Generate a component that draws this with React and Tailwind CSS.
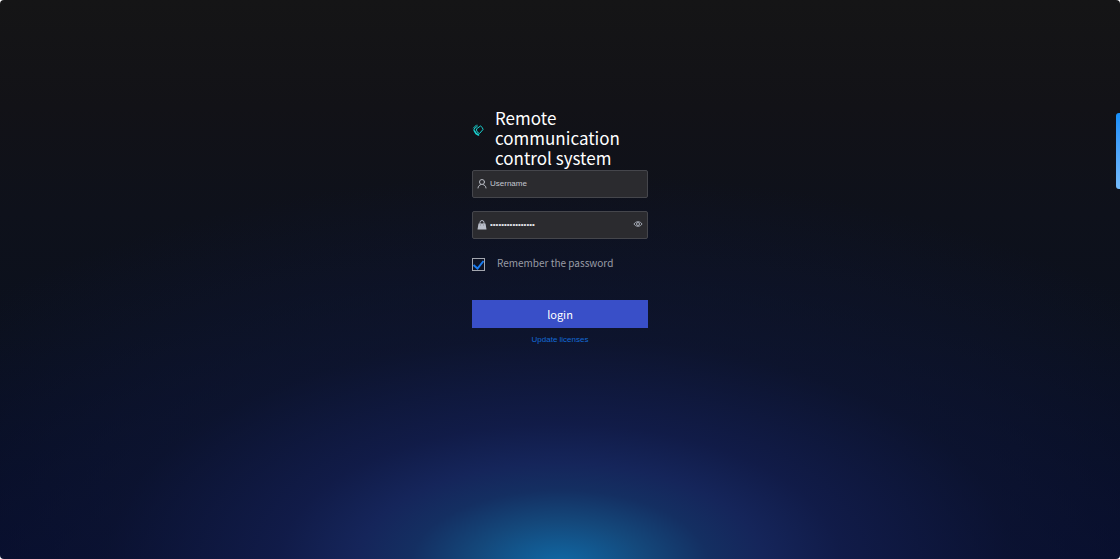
import { useState } from "react";

function LogoIcon() {
  return (
    <svg
      viewBox="0 0 24 24"
      className="h-3 w-3 shrink-0"
      fill="none"
      stroke="#19d3d1"
      strokeWidth="2"
      strokeLinejoin="round"
      strokeLinecap="round"
      aria-hidden="true"
    >
      <path d="M10 9 17 4Q22 7 22 11L15 19Q10 18 9 13Z" />
      <path d="M3 8 9 2" />
      <path d="M4 13V10L11 4" />
      <path d="M5 14 8 19 13 22" strokeWidth="3" />
    </svg>
  );
}

function UserIcon() {
  return (
    <svg
      viewBox="0 0 20 20"
      className="h-[10px] w-[10px] shrink-0"
      fill="none"
      stroke="#b4b7bf"
      strokeWidth="2"
      strokeLinecap="round"
      aria-hidden="true"
    >
      <circle cx="10" cy="6" r="5" />
      <path d="M2 18c0-4 3-6 6-7M18 18c0-4-3-6-6-7" />
    </svg>
  );
}

function LockIcon() {
  return (
    <svg viewBox="0 0 20 20" className="h-[10px] w-[10px] shrink-0" aria-hidden="true">
      <path d="M6 8V5a4 4 0 0 1 8 0v3" fill="none" stroke="#b9bdc8" strokeWidth="2" />
      <path d="M3 7h14l2 12H1Z" fill="#b9bdc8" />
      <path d="M7 9v2M13 9v2" stroke="#55565c" strokeWidth="1" />
    </svg>
  );
}

function EyeIcon() {
  return (
    <svg
      viewBox="0 0 20 20"
      className="h-[10px] w-[10px]"
      fill="none"
      stroke="#a3a8b3"
      strokeWidth="2"
      aria-hidden="true"
    >
      <path d="M2 8c3-6 13-6 16 0-3 6-13 6-16 0Z" />
      <circle cx="10" cy="8" r="3" />
    </svg>
  );
}

const fieldClass =
  "flex h-7 items-center gap-[3px] rounded-xs border border-[#45464c] bg-[#2b2b2f] px-1";
const inputClass =
  "min-w-0 flex-1 bg-transparent font-['Liberation_Sans',sans-serif] text-[8px] leading-3 text-[#e4e6ec] outline-none placeholder:text-[#c4c7cf]";

export default function App() {
  const [username, setUsername] = useState("");
  const [password, setPassword] = useState("remote-control-1");
  const [showPassword, setShowPassword] = useState(false);
  const [remember, setRemember] = useState(true);

  return (
    <div className="bg-white">
      <main className="relative min-h-screen overflow-hidden rounded-[4px] bg-[radial-gradient(ellipse_70%_70%_at_50%_101%,#1069a5_0%,#14487b_11%,#142f62_19%,#15255a_26%,#121d4ce6_36%,#0f173899_58%,#0d142e00_100%),linear-gradient(180deg,#151516_0%,#121217_19%,#0e111b_38%,#0b101d_60%,#070d22_80%,#040a28_100%)] px-4 pt-[108px] pb-8 font-['Noto_Sans_CJK_SC',sans-serif]">
        <form className="mx-auto flex w-44 flex-col" onSubmit={(e) => e.preventDefault()}>
          <div className="flex items-start gap-[11px]">
            <div className="flex h-11 items-center">
              <LogoIcon />
            </div>
            <h1 className="text-[17px] leading-5 text-white">Remote communication control system</h1>
          </div>

          <div className={`${fieldClass} mt-[2px]`}>
            <UserIcon />
            <input
              type="text"
              aria-label="Username"
              placeholder="Username"
              value={username}
              onChange={(e) => setUsername(e.target.value)}
              className={inputClass}
            />
          </div>

          <div className={`${fieldClass} mt-[13px]`}>
            <LockIcon />
            <input
              type={showPassword ? "text" : "password"}
              aria-label="Password"
              value={password}
              onChange={(e) => setPassword(e.target.value)}
              className={inputClass}
            />
            <button
              type="button"
              aria-label="Show password"
              onClick={() => setShowPassword(!showPassword)}
            >
              <EyeIcon />
            </button>
          </div>

          <label className="mt-4 flex h-[18px] items-center gap-3 text-[10px] leading-4 text-[#999ca5]">
            <span className="grid h-[13px] w-[13px] shrink-0">
              <input
                type="checkbox"
                checked={remember}
                onChange={(e) => setRemember(e.target.checked)}
                className="col-start-1 row-start-1 h-[13px] w-[13px] appearance-none border border-[#a3a6ae]"
              />
              {remember && (
                <svg
                  viewBox="0 0 13 13"
                  className="pointer-events-none col-start-1 row-start-1"
                  fill="none"
                  stroke="#1a7cf0"
                  strokeWidth="2"
                  aria-hidden="true"
                >
                  <path d="M1.5 7 5.5 10.5 11.5 3" />
                </svg>
              )}
            </span>
            <span className="pb-[2px]">Remember the password</span>
          </label>

          <button type="submit" className="mt-[27px] h-7 bg-[#394fc8] text-[11px] leading-4 text-white">
            login
          </button>
          <a
            href="#licenses"
            className="mt-[6px] text-center font-['Liberation_Sans',sans-serif] text-[8px] leading-3 text-[#136ad6]"
          >
            Update licenses
          </a>
        </form>

        {/* side drawer handle */}
        <div className="absolute top-[113px] right-0 h-[76px] w-1 rounded-l-[3px] bg-linear-to-b from-[#1590fb] to-[#74bbfb]" />
      </main>
    </div>
  );
}
